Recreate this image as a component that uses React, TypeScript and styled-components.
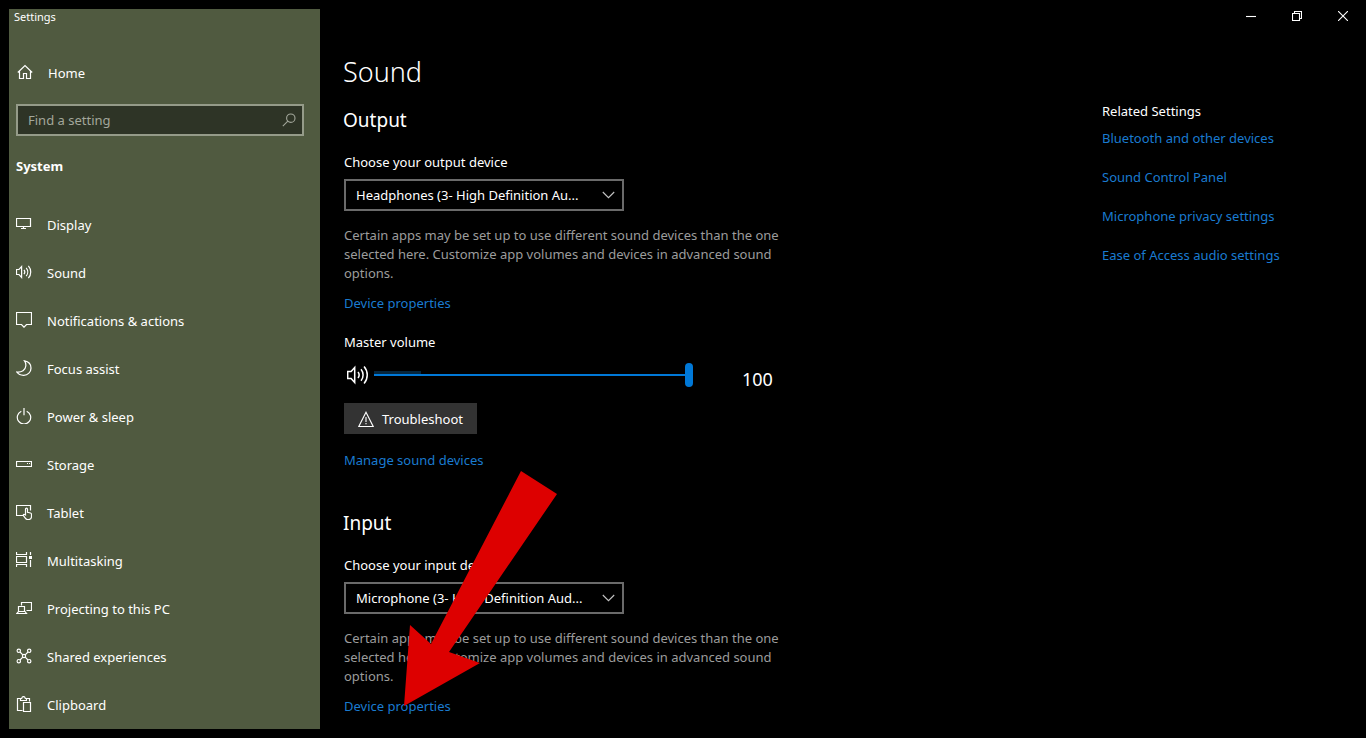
import React from "react";
import styled, { createGlobalStyle } from "styled-components";

const GlobalStyle = createGlobalStyle`
  *, *::before, *::after { box-sizing: border-box; }
  body {
    margin: 0;
    background: #000;
    color: #fff;
    font-family: "Noto Sans", "Open Sans", sans-serif;
    font-size: 13px;
    line-height: 20px;
  }
  button, input, select { font: inherit; color: inherit; }
  h1, h2, h3, p, ul { margin: 0; padding: 0; font-weight: 400; }
  ul { list-style: none; }
`;

const Shell = styled.div`
  display: flex;
  min-height: 100vh;
`;

const Sidebar = styled.aside`
  flex: 0 0 311px;
  margin: 9px 0 9px 9px;
  background: #505a40;
`;

const AppName = styled.div`
  padding: 0 5px;
  font-size: 11px;
  line-height: 16px;
`;

const HomeLink = styled.a`
  display: flex;
  align-items: center;
  gap: 15px;
  height: 40px;
  margin-top: 28px;
  padding-left: 8px;
  color: #fff;
  text-decoration: none;
`;

const SearchBox = styled.label`
  display: flex;
  align-items: center;
  height: 32px;
  margin: 11px 16px 0 7px;
  padding: 0 6px 0 10px;
  border: 2px solid #959b89;
  background: #2e3426;
  color: #a3a79b;
`;

const SearchInput = styled.input`
  flex: 1;
  min-width: 0;
  height: 20px;
  padding: 0;
  border: 0;
  outline: 0;
  background: none;
  &::placeholder { color: #a3a79b; opacity: 1; }
`;

const GroupTitle = styled.h2`
  margin: 20px 7px 0;
  font-size: 13px;
  line-height: 20px;
  font-weight: 700;
`;

const NavList = styled.ul`
  margin-top: 25px;
`;

const NavLink = styled.a`
  display: flex;
  align-items: center;
  gap: 15px;
  height: 48px;
  padding-left: 7px;
  color: #fff;
  text-decoration: none;
`;

const NavIcon = styled.svg`
  flex: none;
  width: 16px;
  height: 16px;
  margin-bottom: 2px;
  fill: none;
  stroke: currentColor;
  stroke-width: 1.2;
`;

const Main = styled.main`
  flex: 1;
  min-width: 0;
`;

const TitleBar = styled.header`
  display: flex;
  justify-content: flex-end;
`;

const WindowButton = styled.button`
  display: grid;
  place-items: center;
  width: 46px;
  height: 32px;
  padding: 0;
  border: 0;
  background: none;
`;

const LineIcon = styled.svg`
  flex: none;
  fill: none;
  stroke: currentColor;
  stroke-width: 1.1;
`;

const Columns = styled.div`
  display: flex;
  justify-content: space-between;
  padding-left: 24px;
`;

const Panel = styled.div`
  flex: 0 1 450px;
  padding-top: 22px;
`;

const PageTitle = styled.h1`
  margin-left: -1px;
  font-size: 27px;
  font-weight: 300;
  line-height: 36px;
`;

const Section = styled.section<{ $gap: number }>`
  position: relative;
  display: flex;
  flex-direction: column;
  align-items: flex-start;
  margin-top: ${(p) => p.$gap}px;
`;

const SectionTitle = styled.h2`
  margin: 0 0 18px -1px;
  font-size: 19px;
  line-height: 28px;
`;

const SelectWrap = styled.div`
  display: grid;
  align-items: center;
  width: 280px;
  margin-top: 7px;
  > * { grid-area: 1 / 1; }
  > svg { justify-self: end; margin-right: 9px; color: #c4c4c4; pointer-events: none; }
`;

const DeviceSelect = styled.select`
  appearance: none;
  width: 100%;
  height: 32px;
  padding: 0 30px 0 10px;
  border: 2px solid #6a6a6a;
  border-radius: 0;
  background: #000;
`;

const Note = styled.p`
  margin-top: 15px;
  line-height: 19px;
  color: #9c9c9c;
`;

const TextLink = styled.a`
  color: #1a7bd0;
  text-decoration: none;
`;

const PanelLink = styled(TextLink)<{ $gap: number }>`
  margin-top: ${(p) => p.$gap}px;
`;

const VolumeLabel = styled.label`
  margin-top: 19px;
`;

const VolumeRow = styled.div`
  display: flex;
  align-items: center;
  height: 32px;
  margin-top: 7px;
  padding-left: 3px;
`;

const VolumeSlider = styled.input`
  appearance: none;
  width: 319px;
  height: 24px;
  margin: 0 0 0 5px;
  background:
    linear-gradient(#0078d7, #0078d7) 0 11px / 100% 2px no-repeat,
    linear-gradient(#06263d, #06263d) 0 8px / 47px 3px no-repeat;
  &::-webkit-slider-thumb {
    appearance: none;
    width: 8px;
    height: 24px;
    border-radius: 4px;
    background: #0078d7;
  }
`;

const VolumeValue = styled.output`
  margin: 8px 0 0 49px;
  font-size: 18px;
  line-height: 24px;
`;

const ActionButton = styled.button`
  display: flex;
  align-items: center;
  gap: 8px;
  height: 31px;
  margin-top: 12px;
  padding: 0 14px;
  border: 0;
  background: #333;
`;

const PointerArrow = styled.svg`
  position: absolute;
  left: 60px;
  top: -38px;
  fill: #dd0000;
  pointer-events: none;
`;

const Related = styled.aside`
  flex: 0 0 264px;
  padding-top: 69px;
`;

const RelatedTitle = styled.h3`
  font-size: 13px;
  line-height: 20px;
`;

const RelatedList = styled.ul`
  display: grid;
  gap: 19px;
  margin-top: 7px;
`;

const speaker = (
  <>
    <path d="M.5 5.5H3L5.6 2.6v10.8L3 10.5H.5z" />
    <path d="M8 5.8c1 1.3 1 3.1 0 4.4M10.2 3.8c2 2.4 2 6 0 8.4M12.4 1.8c3.1 3.6 3.1 8.8 0 12.4" />
  </>
);

const navItems: { label: string; icon: React.ReactNode }[] = [
  { label: "Display", icon: <path d="M.5 2.5h14v8H.5zM7.5 10.5v2M5 12.5h5" /> },
  { label: "Sound", icon: speaker },
  { label: "Notifications & actions", icon: <path d="M.5.5h15v12h-5L8 15.2 5.5 12.5h-5z" /> },
  {
    label: "Focus assist",
    icon: <path d="M8.5.8C12.4 1.5 15 4.4 15 8a7.2 7.2 0 0 1-7.2 7.3C4.8 15.4 2.2 14 .7 12c5 .5 8.8-2 9.1-6 .2-2-.3-3.8-1.3-5.2z" />,
  },
  { label: "Power & sleep", icon: <path d="M5.3 3.2a6.7 6.7 0 1 0 5.4 0M8 0v7.3" /> },
  { label: "Storage", icon: <path d="M.5 5.5h15v5H.5zM11 7.5h1M13 7.5h1" /> },
  {
    label: "Tablet",
    icon: (
      <>
        <path d="M7 11.5H.5v-10h14v5" />
        <path d="M9.5 11V5.3c0-1.6 2-1.6 2 0v3l3 .7c.8.2 1 .7 1 1.5v1.8c0 2-1.2 3.2-3 3.2h-1c-1 0-1.6-.4-2.2-1.3l-1.7-2.4c-.7-1 .3-2 1.2-1.2z" />
      </>
    ),
  },
  {
    label: "Multitasking",
    icon: (
      <>
        <path d="M.5 0v2.5h10V0M.5 4.5h10v6H.5zM.5 15v-2.5h10V15M14.5 0v3M14.5 8v7" />
        <path d="M13 5.5h3" strokeWidth="3" />
      </>
    ),
  },
  {
    label: "Projecting to this PC",
    icon: <path d="M5.5 5.5v-3h10v8h-5M2.5 11.5v-5h6v5M2.5 11.5h6.5l1.5 2H.8z" />,
  },
  {
    label: "Shared experiences",
    icon: (
      <>
        <circle cx="2.8" cy="2.8" r="1.7" />
        <circle cx="13.2" cy="2.8" r="1.7" />
        <circle cx="2.8" cy="13.2" r="1.7" />
        <circle cx="13.2" cy="13.2" r="1.7" />
        <circle cx="8" cy="8" r="1.6" />
        <path d="M4 4l2.8 2.8M12 4L9.2 6.8M4 12l2.8-2.8M12 12L9.2 9.2" />
      </>
    ),
  },
  {
    label: "Clipboard",
    icon: <path d="M6.5 14.5h-5v-12h3M10.5 2.5h3v3M4.5 4.5v-2h1.2c.4-2.6 3.2-2.6 3.6 0h1.2v2zM7.5 6.5h7v9h-7z" />,
  },
];

const relatedLinks = [
  "Bluetooth and other devices",
  "Sound Control Panel",
  "Microphone privacy settings",
  "Ease of Access audio settings",
];

function DevicePicker({ id, label, device }: { id: string; label: string; device: string }) {
  return (
    <>
      <label htmlFor={id}>{label}</label>
      <SelectWrap>
        <DeviceSelect id={id}>
          <option>{device}</option>
        </DeviceSelect>
        <LineIcon width="13" height="8" viewBox="0 0 13 8" aria-hidden="true">
          <path d="M.8 1l5.7 5.7L12.2 1" />
        </LineIcon>
      </SelectWrap>
      <Note>
        Certain apps may be set up to use different sound devices than the one selected here.
        Customize app volumes and devices in advanced sound options.
      </Note>
      <PanelLink href="#properties" $gap={10}>Device properties</PanelLink>
    </>
  );
}

export default function App() {
  return (
    <>
      <GlobalStyle />
      <Shell>
        <Sidebar>
          <AppName>Settings</AppName>
          <HomeLink href="#home">
            <NavIcon viewBox="0 0 16 16" aria-hidden="true">
              <path d="M.8 8.5L8 1.6l7.2 6.9M2.5 7v7.5h4v-5h3v5h4V7" />
            </NavIcon>
            Home
          </HomeLink>
          <SearchBox>
            <SearchInput type="text" placeholder="Find a setting" aria-label="Find a setting" />
            <LineIcon width="14" height="14" viewBox="0 0 14 14" aria-hidden="true">
              <circle cx="8.8" cy="5.2" r="4.2" />
              <path d="M5.8 8.2L.8 13.2" />
            </LineIcon>
          </SearchBox>
          <GroupTitle>System</GroupTitle>
          <nav>
            <NavList>
              {navItems.map((item) => (
                <li key={item.label}>
                  <NavLink href="#section">
                    <NavIcon viewBox="0 0 16 16" aria-hidden="true">{item.icon}</NavIcon>
                    {item.label}
                  </NavLink>
                </li>
              ))}
            </NavList>
          </nav>
        </Sidebar>
        <Main>
          <TitleBar>
            <WindowButton aria-label="Minimize">
              <LineIcon width="10" height="10" viewBox="0 0 10 10"><path d="M0 5.5h10" /></LineIcon>
            </WindowButton>
            <WindowButton aria-label="Restore">
              <LineIcon width="10" height="10" viewBox="0 0 10 10">
                <path d="M.5 2.5h7v7h-7zM2.5 2.5v-2h7v7h-2" />
              </LineIcon>
            </WindowButton>
            <WindowButton aria-label="Close">
              <LineIcon width="10" height="10" viewBox="0 0 10 10"><path d="M0 0l10 10M10 0L0 10" /></LineIcon>
            </WindowButton>
          </TitleBar>
          <Columns>
            <Panel>
              <PageTitle>Sound</PageTitle>
              <Section $gap={16}>
                <SectionTitle>Output</SectionTitle>
                <DevicePicker
                  id="output-device"
                  label="Choose your output device"
                  device="Headphones (3- High Definition Au..."
                />
                <VolumeLabel htmlFor="volume">Master volume</VolumeLabel>
                <VolumeRow>
                  <LineIcon width="22" height="22" viewBox="0 0 16 16" aria-hidden="true">{speaker}</LineIcon>
                  <VolumeSlider id="volume" type="range" min={0} max={100} defaultValue={100} />
                  <VolumeValue htmlFor="volume">100</VolumeValue>
                </VolumeRow>
                <ActionButton>
                  <LineIcon width="16" height="16" viewBox="0 0 16 16" aria-hidden="true">
                    <path d="M8 1.3L15.2 15.5H.8zM8 6v5M8 12v1.3" />
                  </LineIcon>
                  Troubleshoot
                </ActionButton>
                <PanelLink href="#manage" $gap={16}>Manage sound devices</PanelLink>
              </Section>
              <Section $gap={39}>
                <SectionTitle>Input</SectionTitle>
                <DevicePicker
                  id="input-device"
                  label="Choose your input device"
                  device="Microphone (3- High Definition Aud..."
                />
                <PointerArrow width="154" height="236" viewBox="0 0 154 236" aria-hidden="true">
                  <path d="M117 0L153 23 45 181l31 11L0 235 6 154l21 19z" />
                </PointerArrow>
              </Section>
            </Panel>
            <Related>
              <RelatedTitle>Related Settings</RelatedTitle>
              <RelatedList>
                {relatedLinks.map((text) => (
                  <li key={text}>
                    <TextLink href="#related">{text}</TextLink>
                  </li>
                ))}
              </RelatedList>
            </Related>
          </Columns>
        </Main>
      </Shell>
    </>
  );
}
